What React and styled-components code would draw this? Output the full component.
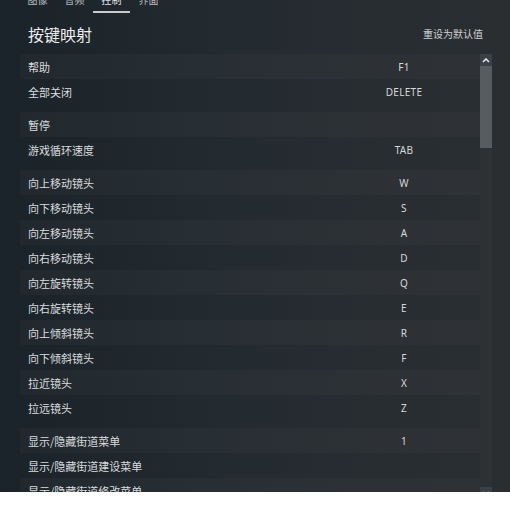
import React from 'react';
import styled, { createGlobalStyle } from 'styled-components';

const GlobalStyle = createGlobalStyle`
  body {
    margin: 0;
    background: #ffffff;
  }
`;

const groups = [
  [
    ['帮助', 'F1'],
    ['全部关闭', 'DELETE'],
  ],
  [
    ['暂停', ''],
    ['游戏循环速度', 'TAB'],
  ],
  [
    ['向上移动镜头', 'W'],
    ['向下移动镜头', 'S'],
    ['向左移动镜头', 'A'],
    ['向右移动镜头', 'D'],
    ['向左旋转镜头', 'Q'],
    ['向右旋转镜头', 'E'],
    ['向上倾斜镜头', 'R'],
    ['向下倾斜镜头', 'F'],
    ['拉近镜头', 'X'],
    ['拉远镜头', 'Z'],
  ],
  [
    ['显示/隐藏街道菜单', '1'],
    ['显示/隐藏街道建设菜单', ''],
    ['显示/隐藏街道修改菜单', ''],
  ],
];

const tabs = ['图像', '音频', '控制', '界面'];

function App() {
  return (
    <Screen>
      <GlobalStyle />
      <TabBar>
        {tabs.map((t) => (
          <Tab key={t} active={t === '控制'}>{t}</Tab>
        ))}
      </TabBar>
      <Header>
        <Title>按键映射</Title>
        <ResetButton>重设为默认值</ResetButton>
      </Header>
      <Pane>
        <List>
          {groups.map((g, gi) => (
            <Group key={gi}>
              {g.map(([label, key], i) => (
                <Row key={label} shaded={i % 2 === 0}>
                  <Label>{label}</Label>
                  <KeyCell>{key}</KeyCell>
                </Row>
              ))}
            </Group>
          ))}
        </List>
        <Scrollbar>
          <ArrowButton>
            <svg width="8" height="5" viewBox="0 0 8 5">
              <path d="M1 4 L4 1 L7 4" stroke="#e6e6e6" strokeWidth="1.6" fill="none" />
            </svg>
          </ArrowButton>
          <Thumb />
          <Track />
          <ArrowButton>
            <svg width="8" height="5" viewBox="0 0 8 5">
              <path d="M1 1 L4 4 L7 1" stroke="#e6e6e6" strokeWidth="1.6" fill="none" />
            </svg>
          </ArrowButton>
        </Scrollbar>
      </Pane>
    </Screen>
  );
}

export default App;

const Screen = styled.div`
  height: 492px;
  overflow: hidden;
  background: linear-gradient(90deg, #1b232a 0%, #222a30 40%, #282d31 75%, #2a2e31 100%);
  font-family: "Noto Sans CJK SC", "Noto Sans", sans-serif;
  color: #dcdedf;
`;

const TabBar = styled.div`
  display: flex;
  margin-top: -6px;
  padding-left: 19px;
`;

const Tab = styled.div`
  width: 37px;
  text-align: center;
  font-size: 10px;
  line-height: 11px;
  padding-bottom: 6px;
  color: ${(p) => (p.active ? '#e4e4e4' : '#b8bbbd')};
  border-bottom: 2px solid ${(p) => (p.active ? '#c9cbcc' : 'transparent')};
`;

const Header = styled.div`
  height: 41px;
  display: flex;
  align-items: center;
  justify-content: space-between;
  padding: 0 27px 0 28px;
`;

const Title = styled.div`
  font-size: 16px;
  color: #eceded;
`;

const ResetButton = styled.div`
  font-size: 10px;
  color: #cfd1d2;
`;

const Pane = styled.div`
  display: flex;
  padding-left: 20px;
  height: 445px;
`;

const List = styled.div`
  width: 460px;
  display: flex;
  flex-direction: column;
  gap: 8px;
`;

const Group = styled.div`
  display: flex;
  flex-direction: column;
`;

const Row = styled.div`
  height: 25px;
  display: grid;
  grid-template-columns: 1fr 140px;
  align-items: center;
  padding: 0 6px 0 8px;
  background: ${(p) => (p.shaded ? 'rgba(255, 255, 255, 0.025)' : 'transparent')};
`;

const Label = styled.div`
  font-size: 11px;
  color: #dadcdd;
  white-space: nowrap;
`;

const KeyCell = styled.div`
  text-align: center;
  font-family: "Noto Sans", "DejaVu Sans", sans-serif;
  font-size: 10px;
  color: #d6d8d9;
  letter-spacing: 0.3px;
`;

const Scrollbar = styled.div`
  width: 12px;
  display: flex;
  flex-direction: column;
`;

const ArrowButton = styled.div`
  height: 12px;
  display: flex;
  align-items: center;
  justify-content: center;
  background: #3a4045;
`;

const Thumb = styled.div`
  height: 82px;
  background: #575c60;
`;

const Track = styled.div`
  flex: 1;
  background: rgba(255, 255, 255, 0.02);
`;
